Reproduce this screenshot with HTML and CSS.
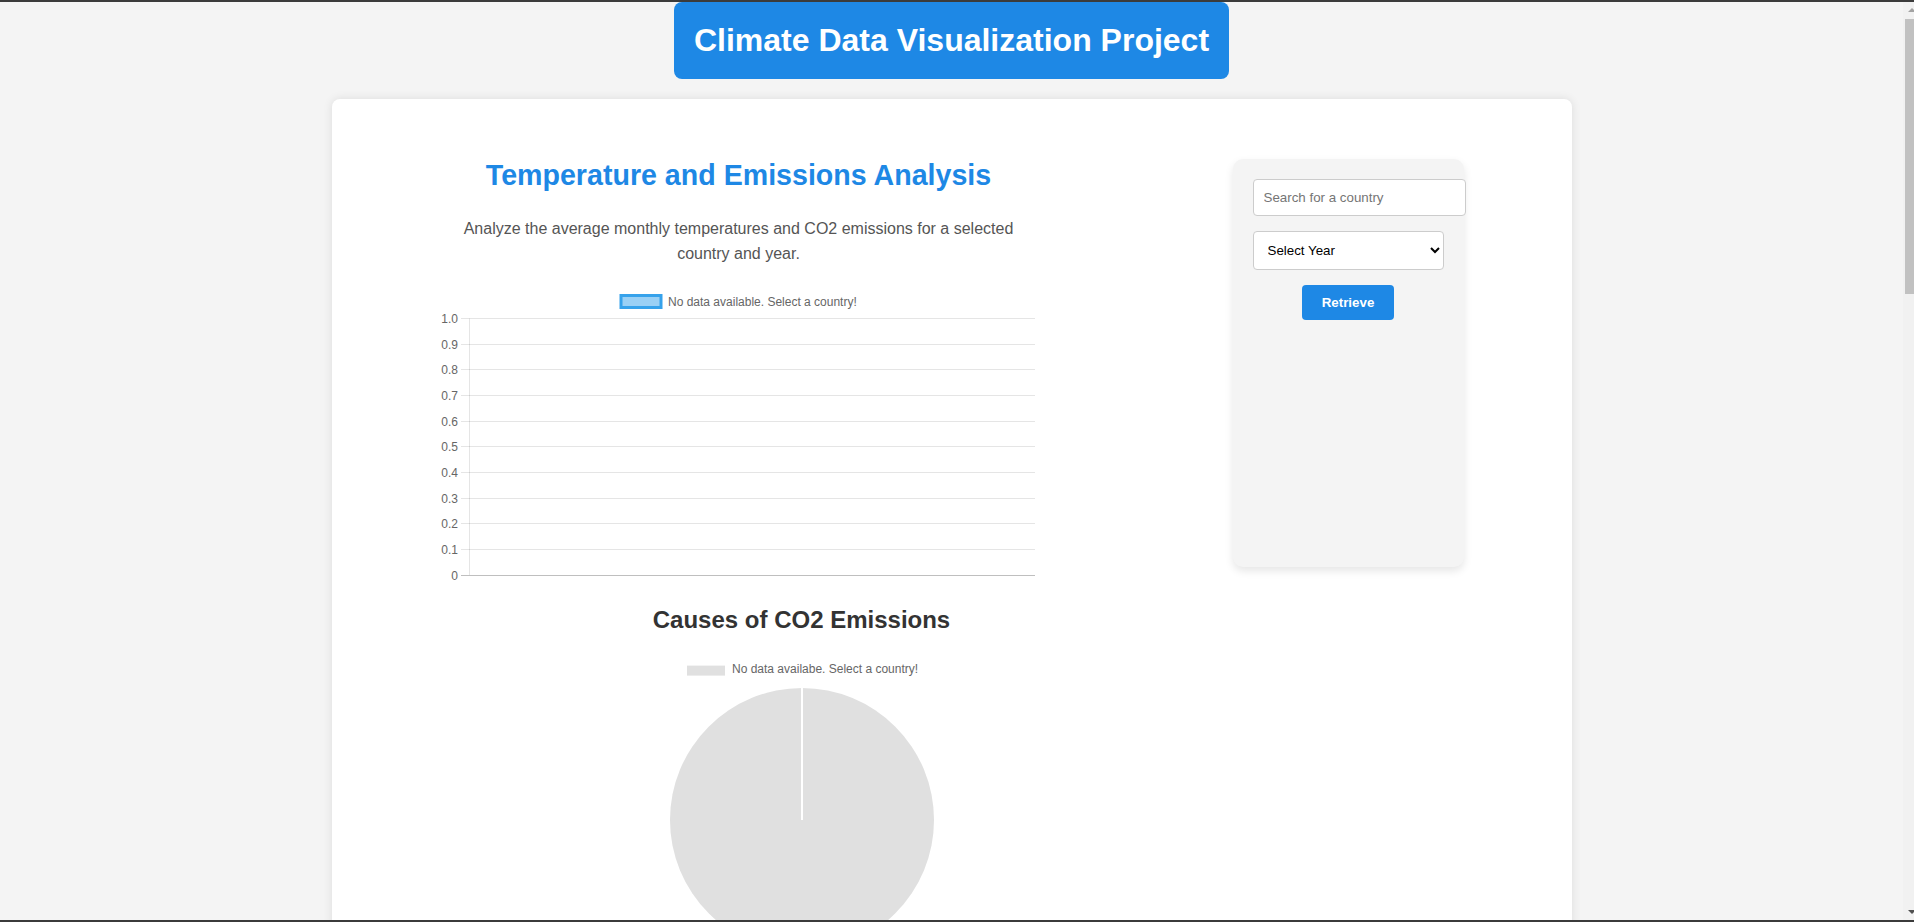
FILE: index.html
```html
<!DOCTYPE html>
<html lang="en">
<head>
<meta charset="utf-8">
<title>Climate Data Visualization Project</title>
<link rel="stylesheet" href="styles.css">
</head>
<body class="frame">
  <div class="viewport">
    <div class="page">
      <header class="site-header">
        <h1 class="site-title">Climate Data Visualization Project</h1>
      </header>
      <main class="card">
        <section class="analysis">
          <div class="intro">
            <h2 class="intro-title">Temperature and Emissions Analysis</h2>
            <p class="intro-text">Analyze the average monthly temperatures and CO2 emissions for a selected country and year.</p>
            <svg class="bar-chart" width="600" height="305" viewBox="0 0 600 305">
              <rect x="183" y="14.5" width="40" height="12" fill="rgba(54,162,235,0.5)" stroke="#36a2eb" stroke-width="3"/>
              <text class="chart-text" x="230" y="25">No data available. Select a country!</text>
              <g stroke="rgba(0,0,0,0.1)" stroke-width="1">
                <line x1="23" y1="37.5" x2="597" y2="37.5"/>
                <line x1="23" y1="63.5" x2="597" y2="63.5"/>
                <line x1="23" y1="88.5" x2="597" y2="88.5"/>
                <line x1="23" y1="114.5" x2="597" y2="114.5"/>
                <line x1="23" y1="140.5" x2="597" y2="140.5"/>
                <line x1="23" y1="165.5" x2="597" y2="165.5"/>
                <line x1="23" y1="191.5" x2="597" y2="191.5"/>
                <line x1="23" y1="217.5" x2="597" y2="217.5"/>
                <line x1="23" y1="242.5" x2="597" y2="242.5"/>
                <line x1="23" y1="268.5" x2="597" y2="268.5"/>
                <line x1="31.5" y1="37.5" x2="31.5" y2="294"/>
              </g>
              <line x1="23" y1="294.5" x2="597" y2="294.5" stroke="rgba(0,0,0,0.25)" stroke-width="1"/>
              <g class="chart-text" text-anchor="end">
                <text x="20" y="41.5">1.0</text>
                <text x="20" y="67.5">0.9</text>
                <text x="20" y="92.5">0.8</text>
                <text x="20" y="118.5">0.7</text>
                <text x="20" y="144.5">0.6</text>
                <text x="20" y="169.5">0.5</text>
                <text x="20" y="195.5">0.4</text>
                <text x="20" y="221.5">0.3</text>
                <text x="20" y="246.5">0.2</text>
                <text x="20" y="272.5">0.1</text>
                <text x="20" y="298.5">0</text>
              </g>
            </svg>
          </div>
          <div class="pie-section">
            <h2 class="pie-title">Causes of CO2 Emissions</h2>
            <svg class="pie-chart" width="400" height="320" viewBox="0 0 400 320">
              <rect x="85" y="11.6" width="38" height="10" fill="#e0e0e0"/>
              <text class="chart-text" x="130" y="19">No data availabe. Select a country!</text>
              <circle cx="200" cy="166" r="132" fill="#e0e0e0"/>
              <line x1="200" y1="33.5" x2="200" y2="166" stroke="#ffffff" stroke-width="2"/>
            </svg>
          </div>
        </section>
        <aside class="panel">
          <input class="search" type="text" placeholder="Search for a country">
          <select class="year-select">
            <option>Select Year</option>
          </select>
          <div class="actions">
            <button class="retrieve" type="button">Retrieve</button>
          </div>
        </aside>
      </main>
    </div>
    <div class="scrollbar">
      <div class="arrow-up"></div>
      <div class="thumb"></div>
      <div class="track-fill"></div>
      <div class="arrow-down"></div>
    </div>
  </div>
</body>
</html>
```
FILE: styles.css
```css
* {
  box-sizing: border-box;
}

html, body {
  margin: 0;
  height: 100%;
}

.frame {
  height: 100vh;
  overflow: hidden;
  border-top: 2px solid #3b3b3b;
  border-bottom: 2px solid #3b3b3b;
  font-family: "Liberation Sans", Arial, sans-serif;
  background: #f4f4f4;
}

.viewport {
  display: flex;
  height: 100%;
}

.page {
  flex: 1;
  overflow: hidden;
  background: #f4f4f4;
}

.site-header {
  text-align: center;
}

.site-title {
  display: inline-block;
  margin: 0;
  padding: 20px;
  font-size: 32px;
  font-weight: bold;
  color: #ffffff;
  background: #1e88e5;
  border-radius: 8px;
}

.card {
  display: flex;
  align-items: flex-start;
  gap: 67px;
  width: 1240px;
  margin: 20px auto 0;
  padding: 60px 108px 40px 106px;
  background: #ffffff;
  border-radius: 8px;
  box-shadow: 0 0 10px rgba(0, 0, 0, 0.1);
}

.analysis {
  width: 728px;
  flex-shrink: 0;
  display: flex;
  flex-direction: column;
  align-items: flex-start;
}

.intro {
  width: 600px;
  padding-left: 2px;
  text-align: center;
}

.intro-title {
  margin: 0 0 25px;
  font-size: 28.6px;
  font-weight: bold;
  color: #1e88e5;
}

.intro-text {
  margin: 0 0 14px;
  font-size: 16px;
  line-height: 1.55;
  color: #555555;
}

.bar-chart {
  display: block;
  margin-left: -2px;
}

.pie-chart {
  display: block;
}

.chart-text {
  font-family: "Liberation Sans", Arial, sans-serif;
  font-size: 12px;
  fill: #666666;
}

.pie-section {
  width: 100%;
  display: flex;
  flex-direction: column;
  align-items: center;
}

.pie-title {
  margin: 20px 0;
  font-size: 24px;
  font-weight: bold;
  color: #333333;
}

.panel {
  flex-shrink: 0;
  width: 231px;
  height: 408px;
  padding: 20px;
  background: #f4f4f4;
  border-radius: 10px;
  box-shadow: 0 4px 8px rgba(0, 0, 0, 0.1);
}

.search {
  display: block;
  box-sizing: content-box;
  width: 100%;
  margin: 0 0 15px;
  padding: 10px;
  border: 1px solid #cccccc;
  border-radius: 4px;
  background: #ffffff;
  font-family: "Liberation Sans", Arial, sans-serif;
  font-size: 13.33px;
  color: #000000;
}

.search::placeholder {
  color: #757575;
}

.year-select {
  display: block;
  width: 100%;
  margin: 0 0 15px;
  padding: 10px;
  border: 1px solid #cccccc;
  border-radius: 4px;
  background: #ffffff;
  font-family: "Liberation Sans", Arial, sans-serif;
  font-size: 13.33px;
  color: #000000;
}

.actions {
  text-align: center;
}

.retrieve {
  padding: 10px 20px;
  border: none;
  border-radius: 4px;
  background: #1e88e5;
  color: #ffffff;
  font-family: "Liberation Sans", Arial, sans-serif;
  font-size: 13.33px;
  font-weight: bold;
}

.scrollbar {
  width: 11px;
  flex-shrink: 0;
  display: flex;
  flex-direction: column;
  background: #f1f1f1;
  overflow: hidden;
}

.arrow-up {
  flex-shrink: 0;
  width: 0;
  height: 0;
  box-sizing: content-box;
  margin: 6px 0 7px 5px;
  border-left: 4px solid transparent;
  border-right: 4px solid transparent;
  border-bottom: 4px solid #a3a3a3;
  border-top: 0 solid transparent;
}

.thumb {
  height: 275px;
  flex-shrink: 0;
  margin-left: 2px;
  width: 13px;
  background: #c1c1c1;
}

.track-fill {
  flex: 1;
}

.arrow-down {
  flex-shrink: 0;
  width: 0;
  height: 0;
  margin-left: 5px;
  margin-bottom: 6px;
  border-left: 4px solid transparent;
  border-right: 4px solid transparent;
  border-top: 4px solid #505050;
}
```
